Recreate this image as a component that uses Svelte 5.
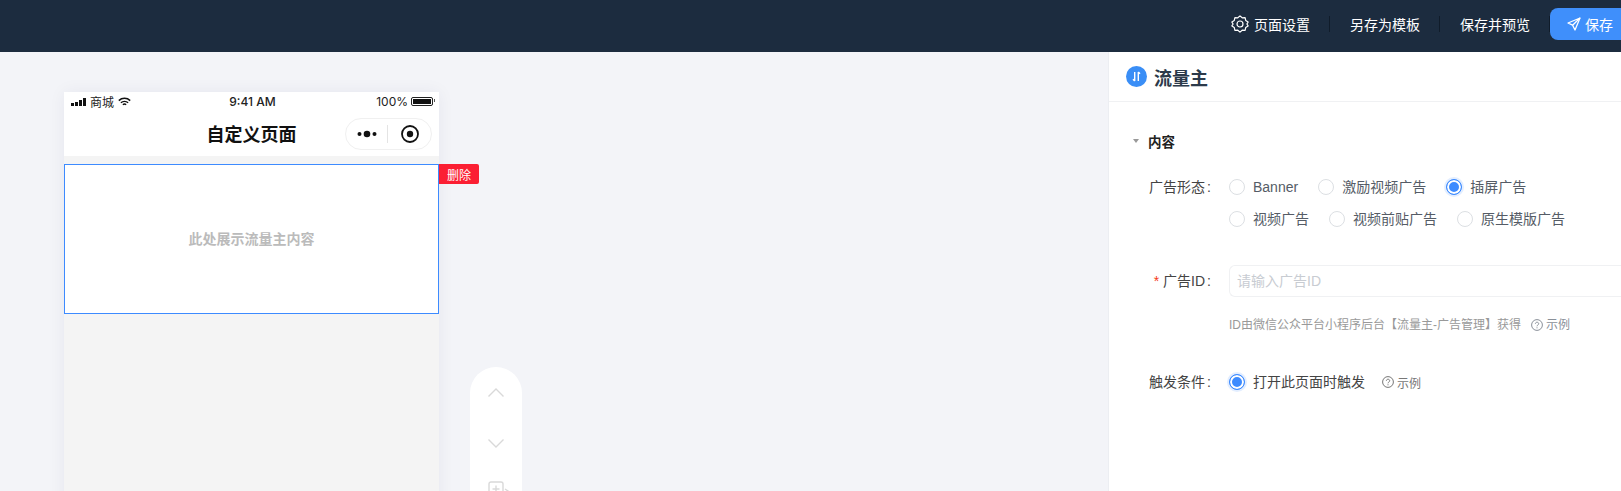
<script>
	const firstRow = [
		{ label: 'Banner', checked: false },
		{ label: '激励视频广告', checked: false },
		{ label: '插屏广告', checked: true }
	];
	const secondRow = [
		{ label: '视频广告', checked: false },
		{ label: '视频前贴广告', checked: false },
		{ label: '原生模版广告', checked: false }
	];
</script>

{#snippet radio(item)}
	<label class="radio">
		<span class="dot" class:on={item.checked}></span>
		<span>{item.label}</span>
	</label>
{/snippet}

{#snippet example(cls)}
	<span class="example {cls}">
		<svg width="12" height="12" viewBox="0 0 12 12" fill="none" stroke="currentColor">
			<circle cx="6" cy="6" r="5.4" />
			<path d="M4.4 4.8c0-2.1 3.3-2.1 3.3 0 0 1.2-1.7 1.2-1.7 2.5" />
			<path d="M6 8.3v1" />
		</svg>
		<span>示例</span>
	</span>
{/snippet}

<div class="page">
	<header class="topbar">
		<button class="link">
			<svg width="18" height="18" viewBox="0 0 18 18" fill="none" stroke="#fff" stroke-width="1.2">
				<path d="M9 .9l2.2 1.9 2.9-.2.6 2.8 2.4 1.7-1.2 1.9 1.2 1.9-2.4 1.7-.6 2.8-2.9-.2L9 17.1l-2.2-1.9-2.9.2-.6-2.8-2.4-1.7L2.1 9 .9 7.1l2.4-1.7.6-2.8 2.9.2z" stroke-linejoin="round" />
				<circle cx="9" cy="9" r="3" />
			</svg>
			页面设置
		</button>
		<i class="sep"></i>
		<button class="link">另存为模板</button>
		<i class="sep"></i>
		<button class="link">保存并预览</button>
		<i class="sep last"></i>
		<button class="save">
			<svg width="14" height="14" viewBox="0 0 14 14" fill="none" stroke="#fff" stroke-width="1.3" stroke-linejoin="round">
				<path d="M13 1L1 6l4.6 2.2L8 13z" />
				<path d="M5.6 8.2L13 1" />
			</svg>
			保存
		</button>
	</header>

	<div class="main">
		<section class="canvas">
			<div class="phone">
				<div class="status">
					<div class="status-left">
						<span class="bars"><i></i><i></i><i></i><i></i></span>
						<span>商城</span>
						<svg width="13" height="10" viewBox="0 0 13 10" fill="none" stroke="#111" stroke-width="1.5">
							<path d="M.8 3.6c3.2-3 8.2-3 11.4 0" />
							<path d="M2.9 5.8c2-1.8 5.2-1.8 7.2 0" />
							<path d="M4.9 7.8c.9-.8 2.3-.8 3.2 0" />
						</svg>
					</div>
					<span class="time">9:41 AM</span>
					<div class="status-right">
						<span>100%</span>
						<span class="battery"><i></i></span>
					</div>
				</div>
				<div class="nav">
					<h1>自定义页面</h1>
					<div class="capsule">
						<svg width="20" height="8" viewBox="0 0 20 8" fill="#111">
							<circle cx="2.5" cy="4" r="2" /><circle cx="10" cy="4" r="3.3" /><circle cx="17.5" cy="4" r="2" />
						</svg>
						<i class="capsule-sep"></i>
						<svg width="18" height="18" viewBox="0 0 18 18">
							<circle cx="9" cy="9" r="8" fill="none" stroke="#111" stroke-width="1.8" />
							<circle cx="9" cy="9" r="3.2" fill="#111" />
						</svg>
					</div>
				</div>
				<div class="body">
					<div class="block">
						<span>此处展示流量主内容</span>
						<button class="del">删除</button>
					</div>
				</div>
			</div>

			<div class="rail">
				<svg width="16" height="9" viewBox="0 0 16 9" fill="none" stroke="#d9d9d9" stroke-width="1.4">
					<path d="M.5 8.5L8 1l7.5 7.5" />
				</svg>
				<svg width="16" height="9" viewBox="0 0 16 9" fill="none" stroke="#d9d9d9" stroke-width="1.4">
					<path d="M.5.5L8 8l7.5-7.5" />
				</svg>
				<svg class="copy" width="22" height="20" viewBox="0 0 22 20" fill="none" stroke="#d9d9d9" stroke-width="1.4">
					<rect x="1" y="1" width="14" height="14" rx="2" />
					<path d="M8 4.5v7M4.5 8h7M17 8l3 2-3 2" />
				</svg>
			</div>
		</section>

		<aside class="panel">
			<div class="panel-head">
				<span class="badge">
					<svg width="11" height="11" viewBox="0 0 11 11" fill="none" stroke="#fff" stroke-width="1.4">
						<path d="M3.7 1v9M2 8.2l1.7 1.8M7.3 10V1M9 2.8L7.3 1" />
					</svg>
				</span>
				<h2>流量主</h2>
			</div>

			<div class="section">
				<div class="section-title">
					<i class="caret"></i>
					<span>内容</span>
				</div>

				<div class="field type">
					<div class="name">广告形态<span class="colon">:</span></div>
					<div class="options">
						<div class="opts">
							{#each firstRow as item}
								{@render radio(item)}
							{/each}
						</div>
						<div class="opts">
							{#each secondRow as item}
								{@render radio(item)}
							{/each}
						</div>
					</div>
				</div>

				<div class="field id">
					<div class="name"><em>*</em>广告ID<span class="colon">:</span></div>
					<div class="control">
						<input placeholder="请输入广告ID" />
						<p class="hint">
							<span>ID由微信公众平台小程序后台【流量主-广告管理】获得</span>
							{@render example('muted')}
						</p>
					</div>
				</div>

				<div class="field trigger">
					<div class="name">触发条件<span class="colon">:</span></div>
					<div class="opts">
						{@render radio({ label: '打开此页面时触发', checked: true })}
						{@render example('dark')}
					</div>
				</div>
			</div>
		</aside>
	</div>
</div>

<style>
	:global(body) {
		margin: 0;
		background: #f3f4f8;
	}

	.page {
		width: 1621px;
		height: 491px;
		overflow: hidden;
		display: flex;
		flex-direction: column;
		font-family: 'Liberation Sans', 'Noto Sans CJK SC', sans-serif;
		font-size: 14px;
		color: #333;
	}

	button {
		border: none;
		background: none;
		padding: 0;
		font: inherit;
		color: inherit;
	}

	.topbar {
		height: 52px;
		box-sizing: border-box;
		padding-bottom: 4px;
		flex: none;
		background: #1c2c3f;
		display: flex;
		align-items: center;
		justify-content: flex-end;
	}

	.link {
		display: flex;
		align-items: center;
		gap: 5px;
		color: #fff;
	}

	.sep {
		width: 1px;
		height: 16px;
		background: #101c2a;
		margin: 0 20px 0 19px;
	}

	.sep.last {
		margin-right: 0;
	}

	.save {
		width: 71px;
		height: 32px;
		background: #3f8ffb;
		color: #fff;
		border-radius: 8px 0 0 8px;
		display: flex;
		align-items: center;
		gap: 4px;
		padding-left: 17px;
		box-sizing: border-box;
	}

	.main {
		flex: 1;
		display: flex;
		min-height: 0;
	}

	.canvas {
		flex: 1;
		display: flex;
		align-items: flex-start;
		padding: 40px 0 0 64px;
	}

	.phone {
		width: 375px;
		height: 600px;
		flex: none;
		background: #f4f4f4;
		box-shadow: 0 0 16px rgba(30, 40, 80, 0.06);
	}

	.status {
		height: 19px;
		background: #fff;
		padding: 0 5px 0 7px;
		display: grid;
		grid-template-columns: 1fr auto 1fr;
		align-items: center;
		font-family: Inter, 'Noto Sans CJK SC', sans-serif;
		font-size: 12px;
		color: #222;
	}

	.status-left {
		display: flex;
		align-items: center;
		gap: 4px;
	}

	.bars {
		display: flex;
		align-items: flex-end;
		gap: 1px;
		height: 8px;
	}

	.bars i {
		width: 3px;
		background: #111;
	}

	.bars i:nth-child(1) { height: 3px; }
	.bars i:nth-child(2) { height: 4px; }
	.bars i:nth-child(3) { height: 6px; }
	.bars i:nth-child(4) { height: 8px; }

	.time {
		font-size: 12px;
		font-weight: 500;
	}

	.status-right {
		display: flex;
		align-items: center;
		justify-content: flex-end;
		gap: 3px;
	}

	.battery {
		width: 22px;
		height: 9px;
		border: 1px solid #222;
		border-radius: 2px;
		padding: 1px;
		box-sizing: border-box;
		display: block;
		margin-right: 1px;
		position: relative;
	}

	.battery::after {
		content: '';
		position: absolute;
		right: -3px;
		top: 1px;
		width: 1px;
		height: 3px;
		background: #555;
	}

	.battery i {
		display: block;
		height: 100%;
		background: #111;
	}

	.nav {
		height: 45px;
		padding-bottom: 2px;
		box-sizing: border-box;
		background: #fff;
		display: flex;
		align-items: center;
		justify-content: center;
		position: relative;
	}

	h1 {
		margin: 0;
		font-size: 18px;
		font-weight: 700;
		color: #111;
	}

	.capsule {
		position: absolute;
		right: 7px;
		top: 7px;
		width: 87px;
		height: 32px;
		box-sizing: border-box;
		border: 1px solid #f0f0f0;
		border-radius: 16px;
		display: flex;
		align-items: center;
		gap: 10px;
		padding-left: 11px;
	}

	.capsule-sep {
		width: 1px;
		height: 18px;
		background: #e4e4e4;
		margin-right: 3px;
	}

	.body {
		padding-top: 8px;
	}

	.block {
		height: 150px;
		box-sizing: border-box;
		background: #fff;
		border: 1px solid #3d8bff;
		display: flex;
		align-items: center;
		justify-content: center;
		position: relative;
		font-weight: 700;
		color: #bbb;
	}

	.block > span {
		margin-top: -3px;
	}

	.del {
		position: absolute;
		left: calc(100% + 1px);
		top: -1px;
		width: 40px;
		height: 20px;
		background: #fb1f33;
		color: #fff;
		font-size: 12px;
		font-weight: 400;
		border-radius: 0 2px 2px 0;
	}

	.rail {
		width: 52px;
		height: 240px;
		flex: none;
		margin: 275px 0 0 31px;
		background: #fff;
		border-radius: 26px;
		display: flex;
		flex-direction: column;
		align-items: center;
		padding-top: 21px;
		gap: 42px;
	}

	.copy {
		margin: -9px 0 0 5px;
	}

	.panel {
		width: 512px;
		flex: none;
		background: #fff;
		border-left: 1px solid #eceef2;
	}

	.panel-head {
		height: 49px;
		border-bottom: 1px solid #f0f1f3;
		display: flex;
		align-items: center;
		gap: 7px;
		padding-left: 17px;
	}

	.badge {
		width: 21px;
		height: 21px;
		border-radius: 50%;
		background: #3a8ef6;
		display: flex;
		align-items: center;
		justify-content: center;
	}

	h2 {
		margin: 0;
		font-size: 18px;
		font-weight: 700;
		color: #2c3a4a;
	}

	.section {
		padding: 29px 0 0 24px;
	}

	.section-title {
		display: flex;
		align-items: center;
		height: 20px;
		gap: 9px;
		font-size: 13.5px;
		font-weight: 700;
		color: #222;
	}

	.caret {
		width: 0;
		height: 0;
		border: 3.5px solid transparent;
		border-top: 4px solid #999;
		border-bottom: 0;
	}

	.field {
		display: flex;
		align-items: flex-start;
	}

	.name {
		width: 79px;
		margin-right: 17px;
		flex: none;
		text-align: right;
		white-space: nowrap;
		line-height: 20px;
		color: #444;
	}

	.name em {
		color: #f5391c;
		font-style: normal;
		margin-right: 4px;
	}

	.colon {
		margin: 0 1px 0 2px;
	}

	.type {
		margin-top: 26px;
	}

	.options {
		display: flex;
		flex-direction: column;
		gap: 12px;
	}

	.opts {
		display: flex;
		align-items: center;
		height: 20px;
		gap: 20px;
	}

	.radio {
		display: flex;
		align-items: center;
		gap: 8px;
		line-height: 20px;
		color: #555c66;
	}

	.dot {
		width: 16px;
		height: 16px;
		box-sizing: border-box;
		border-radius: 50%;
		border: 1px solid #dcdfe3;
		background: #fff;
		flex: none;
	}

	.dot.on {
		border-color: #3d8bff;
		background: #3d8bff;
		box-shadow: inset 0 0 0 2px #fff, 0 0 0 2px #e3eeff;
	}

	.id {
		margin-top: 36px;
	}

	.id .name {
		line-height: 32px;
	}

	.control {
		flex: 1;
		min-width: 0;
	}

	input {
		display: block;
		width: 100%;
		height: 32px;
		box-sizing: border-box;
		border: 1px solid #f0f1f3;
		border-right: none;
		border-radius: 6px 0 0 6px;
		padding: 0 7px;
		font: inherit;
		outline: none;
	}

	input::placeholder {
		color: #c8ccd2;
	}

	.hint {
		margin: 18px 0 0;
		display: flex;
		align-items: center;
		gap: 10px;
		font-size: 12px;
		line-height: 20px;
		color: #999;
	}

	.example {
		display: flex;
		align-items: center;
		gap: 3px;
		font-size: 12px;
	}

	.example.muted {
		color: #8a9099;
	}

	.example.dark {
		color: #777;
		margin-left: -3px;
	}

	.trigger {
		margin-top: 37px;
	}

	.trigger .radio {
		color: #444;
	}
</style>
